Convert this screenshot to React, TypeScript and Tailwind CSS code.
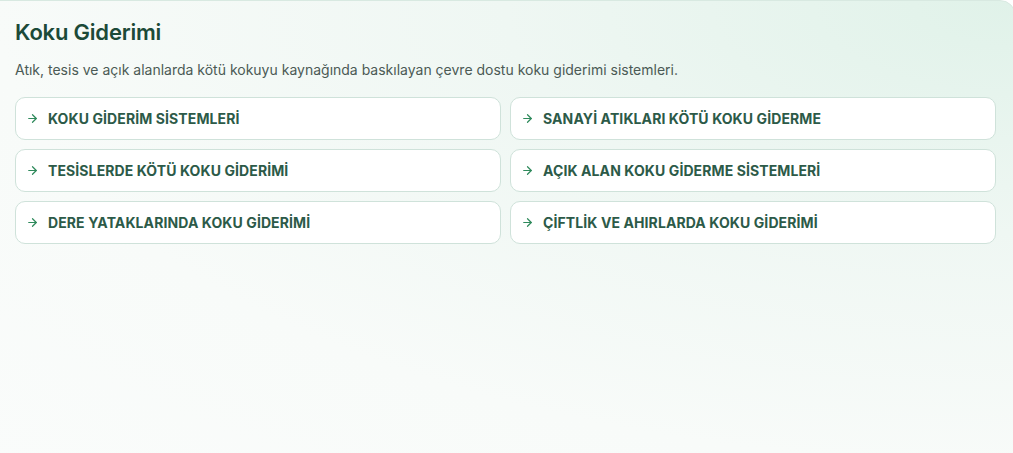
import { ArrowRight } from 'lucide-react'

const LINKS = [
  'KOKU GİDERİM SİSTEMLERİ',
  'SANAYİ ATIKLARI KÖTÜ KOKU GİDERME',
  'TESİSLERDE KÖTÜ KOKU GİDERİMİ',
  'AÇIK ALAN KOKU GİDERME SİSTEMLERİ',
  'DERE YATAKLARINDA KOKU GİDERİMİ',
  'ÇİFTLİK VE AHIRLARDA KOKU GİDERİMİ',
]

export default function App() {
  return (
    <div className="h-[453px] w-full overflow-hidden bg-white" style={{ fontFamily: "Inter, 'Noto Sans', sans-serif" }}>
      {/* Card */}
      <section className="-ml-4 -mr-[3px] h-[470px] rounded-tr-2xl border border-[#d8e9e1] bg-[radial-gradient(ellipse_at_top_right,_#e0f2e9_0%,_#eff7f3_35%,_#f8fbf9_70%,_#fafcfb_100%)] pl-[30px] pr-[19px] pt-[16px]">
        <h2 className="text-[22px] font-semibold leading-[30px] tracking-[-0.2px] text-[#1c4a38]">Koku Giderimi</h2>
        <p className="mt-[13px] text-[14px] leading-[20px] text-[#4b5a55]">
          Atık, tesis ve açık alanlarda kötü kokuyu kaynağında baskılayan çevre dostu koku giderimi sistemleri.
        </p>

        <div className="mt-[17px] grid grid-cols-2 gap-[9px]">
          {LINKS.map((label) => (
            <a
              key={label}
              href="#"
              className="flex h-[43px] items-center gap-[9px] rounded-[10px] border border-[#cfe2da] bg-white pl-[10px] text-[14px] font-bold tracking-[0.1px] text-[#2c5a48]"
            >
              <ArrowRight className="h-[13px] w-[13px] text-[#2f8a5c]" strokeWidth={2.25} />
              {label}
            </a>
          ))}
        </div>
      </section>
    </div>
  )
}
